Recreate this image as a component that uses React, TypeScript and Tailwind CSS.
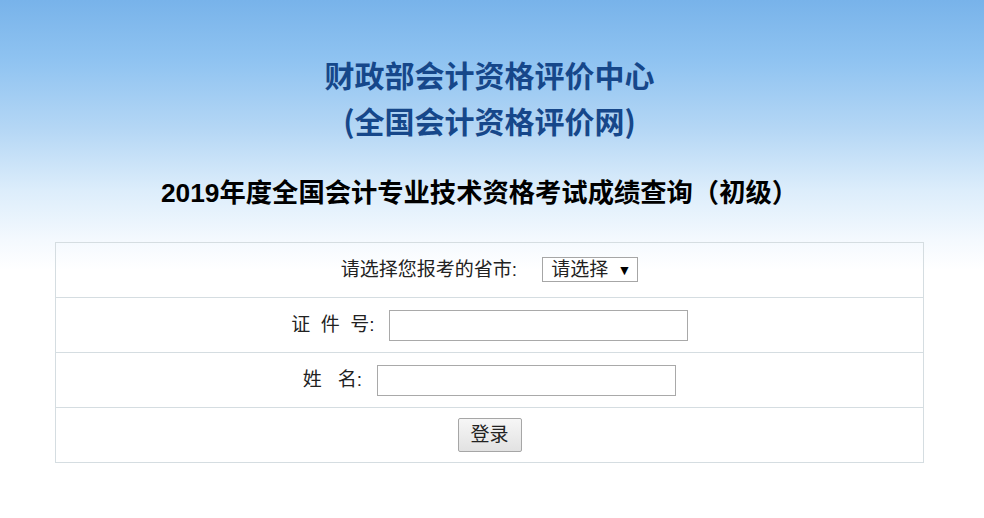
import { useState } from 'react'

const rowCls = 'h-[55px] flex items-center justify-center border-b border-[#d5dde1] last:border-b-0 last:h-[54px]'
const labelCls = 'text-[19px] text-[#222] whitespace-pre'
const inputCls = 'w-[299px] h-[31px] border border-[#a9a9a9] bg-white px-1 text-[16px] outline-none'

export default function App() {
  const [province, setProvince] = useState('')
  const [idNo, setIdNo] = useState('')
  const [name, setName] = useState('')

  return (
    <div
      className="min-h-[518px] bg-[linear-gradient(to_bottom,#78b3ea_0px,#8fc3f1_60px,#b5d7f5_130px,#dcedfb_190px,#f4f9fe_240px,#ffffff_270px)]"
      style={{ fontFamily: '"Liberation Sans", "Noto Sans CJK SC", sans-serif' }}
    >
      <div className="ml-[55px] w-[869px] pt-[51px]">
        {/* 标题 */}
        <div
          className="text-center text-[30px] leading-[46px] font-bold text-[#16478a]"
          style={{ fontFamily: '"Noto Sans CJK SC", sans-serif' }}
        >
          <p>财政部会计资格评价中心</p>
          <p>(全国会计资格评价网)</p>
        </div>
        <h1 className="mt-[32px] text-center text-[26.3px] leading-[36px] font-bold text-black -translate-x-[10px]">
          2019年度全国会计专业技术资格考试成绩查询（初级）
        </h1>

        {/* 查询表单 */}
        <div className="mt-[31px] border border-[#d5dde1]">
          <div className={rowCls}>
            <span className={labelCls}>请选择您报考的省市: </span>
            <div className="relative ml-[20px]">
              <select
                value={province}
                onChange={e => setProvince(e.target.value)}
                className="appearance-none w-[96px] h-[25px] pl-[8px] border border-[#a6a6a6] bg-white text-[19px] leading-[23px] text-[#222] outline-none"
              >
                <option value="">请选择</option>
                <option value="11">北京</option>
                <option value="31">上海</option>
              </select>
              <span className="pointer-events-none absolute right-[7px] top-[3px] text-[14px] text-black">▼</span>
            </div>
          </div>

          <div className={rowCls}>
            <span className={labelCls}>{'证\u00a0\u00a0件\u00a0\u00a0号: '}</span>
            <input value={idNo} onChange={e => setIdNo(e.target.value)} className={`ml-[9px] ${inputCls}`} />
          </div>

          <div className={rowCls}>
            <span className={labelCls}>{'姓\u00a0\u00a0\u00a0名: '}</span>
            <input value={name} onChange={e => setName(e.target.value)} className={`ml-[10px] ${inputCls}`} />
          </div>

          <div className={rowCls}>
            <button className="w-[64px] h-[34px] border border-[#a6a6a6] rounded-[2px] bg-[linear-gradient(to_bottom,#f6f6f6,#e2e2e2)] text-[19px] text-[#222]">
              登录
            </button>
          </div>
        </div>
      </div>
    </div>
  )
}
